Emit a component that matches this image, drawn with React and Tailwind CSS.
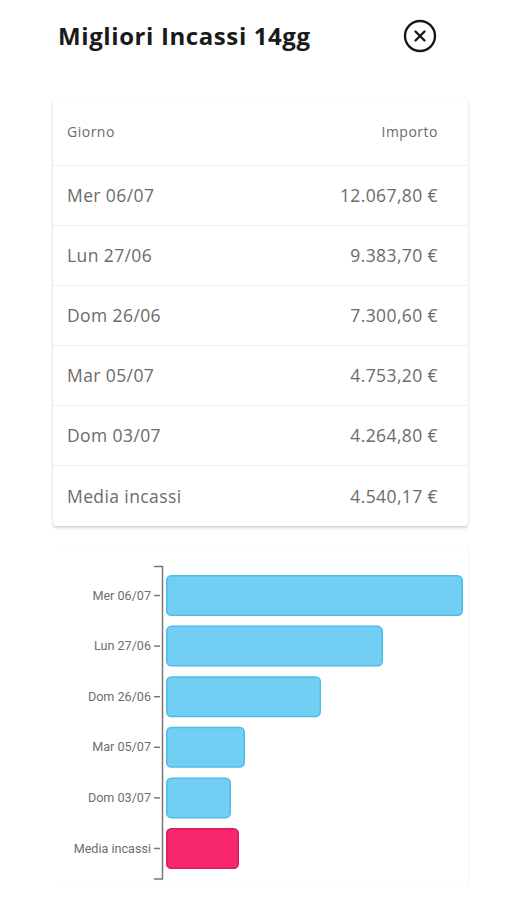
const rows = [
  { day: 'Mer 06/07', amount: '12.067,80 €', w: 297 },
  { day: 'Lun 27/06', amount: '9.383,70 €', w: 217 },
  { day: 'Dom 26/06', amount: '7.300,60 €', w: 155 },
  { day: 'Mar 05/07', amount: '4.753,20 €', w: 79 },
  { day: 'Dom 03/07', amount: '4.264,80 €', w: 65 },
]
const media = { day: 'Media incassi', amount: '4.540,17 €', w: 73 }

function CloseIcon() {
  return (
    <svg width="34" height="34" viewBox="0 0 34 34" fill="none" stroke="#1a1a1a" strokeWidth="2.4" strokeLinecap="round">
      <circle cx="17" cy="17" r="15" />
      <path d="M12.5 12.5l9 9M21.5 12.5l-9 9" />
    </svg>
  )
}

function Chart() {
  const bars = [...rows, media]
  return (
    <svg width="415" height="337" viewBox="0 0 415 337">
      <path d="M101 18.5h8.5v312.5h-8.5" fill="none" stroke="#777" strokeWidth="1.5" />
      {bars.map((b, i) => {
        const y = 27 + i * 50.6
        const pink = i === bars.length - 1
        return (
          <g key={b.day}>
            <line x1="101" x2="107" y1={y + 20.5} y2={y + 20.5} stroke="#777" strokeWidth="1.5" />
            <text x="98" y={y + 24.5} textAnchor="end" fontSize="12.6" fill="#6e6e6e" fontFamily="Roboto, sans-serif">
              {b.day}
            </text>
            <rect
              x="113.75"
              y={y + 0.75}
              width={b.w - 1.5}
              height="39.5"
              rx="4.5"
              fill={pink ? '#f8286f' : '#73cef4'}
              stroke={pink ? '#d9195a' : '#4cbde9'}
              strokeWidth="1.5"
            />
          </g>
        )
      })}
    </svg>
  )
}

export default function App() {
  return (
    <div className="min-h-[900px] bg-white font-['Open_Sans',sans-serif]">
      <div className="flex h-[72px] items-center justify-between pl-[58px] pr-[70px]">
        <h1 className="text-[24px] font-bold tracking-[0.6px] text-[#1a1a1a]">Migliori Incassi 14gg</h1>
        <CloseIcon />
      </div>

      <div className="ml-[53px] mt-[25px] w-[415px] overflow-hidden rounded-[4px] bg-white shadow-[0_2px_3px_rgba(0,0,0,0.18),0_0_2px_rgba(0,0,0,0.06)]">
        <div className="flex h-[69px] items-center justify-between border-b border-[#eeeeee] px-[14px] pr-[30px] text-[14px] tracking-[0.5px] text-[#6b6b6b]">
          <span>Giorno</span>
          <span>Importo</span>
        </div>
        {[...rows, media].map((r, i) => (
          <div
            key={r.day}
            className={`flex h-[60px] items-center justify-between px-[14px] pr-[30px] text-[17.5px] tracking-[0.4px] text-[#6b6b6b] ${i < rows.length ? 'border-b border-[#eeeeee]' : ''}`}
          >
            <span>{r.day}</span>
            <span>{r.amount}</span>
          </div>
        ))}
      </div>

      <div className="ml-[53px] mt-[22px] w-[415px] rounded-[4px] bg-white shadow-[1px_0_2px_rgba(0,0,0,0.06)]">
        <Chart />
      </div>
    </div>
  )
}
